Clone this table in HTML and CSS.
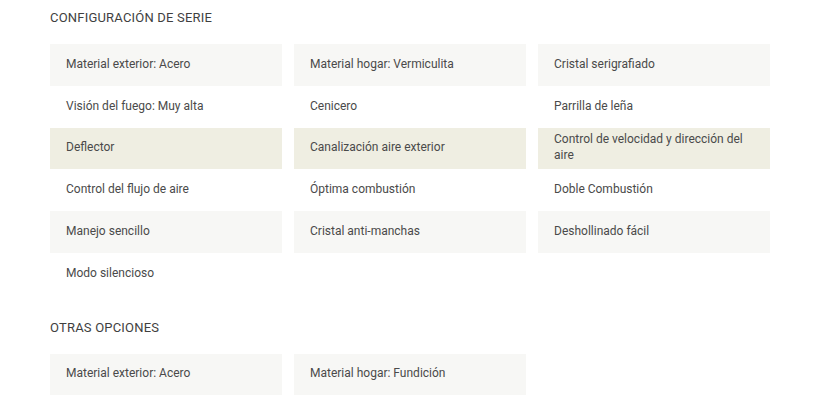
FILE: index.html
```html
<!DOCTYPE html>
<html lang="es">
<head>
<meta charset="utf-8">
<link rel="stylesheet" href="styles.css">
</head>
<body>
<section class="spec">
  <h2 class="spec-title">Configuración de serie</h2>
  <div class="spec-grid">
    <div class="cell shade">Material exterior: Acero</div>
    <div class="cell shade">Material hogar: Vermiculita</div>
    <div class="cell shade">Cristal serigrafiado</div>
    <div class="cell">Visión del fuego: Muy alta</div>
    <div class="cell">Cenicero</div>
    <div class="cell">Parrilla de leña</div>
    <div class="cell hi">Deflector</div>
    <div class="cell hi">Canalización aire exterior</div>
    <div class="cell hi">Control de velocidad y dirección del aire</div>
    <div class="cell">Control del flujo de aire</div>
    <div class="cell">Óptima combustión</div>
    <div class="cell">Doble Combustión</div>
    <div class="cell shade">Manejo sencillo</div>
    <div class="cell shade">Cristal anti-manchas</div>
    <div class="cell shade">Deshollinado fácil</div>
    <div class="cell">Modo silencioso</div>
  </div>
</section>
<section class="spec second">
  <h2 class="spec-title">Otras opciones</h2>
  <div class="spec-grid">
    <div class="cell shade">Material exterior: Acero</div>
    <div class="cell shade">Material hogar: Fundición</div>
  </div>
</section>
</body>
</html>
```
FILE: styles.css
```css
html, body {
  margin: 0;
  padding: 0;
  background: #ffffff;
}
body {
  padding: 8px 50px 0 50px;
  font-family: Roboto, "Liberation Sans", sans-serif;
  color: #4a4a4a;
}
.spec-title {
  margin: 0;
  height: 20px;
  line-height: 20px;
  font-size: 13px;
  font-weight: 400;
  text-transform: uppercase;
  letter-spacing: 0.2px;
  color: #3f3f3f;
}
.spec-grid {
  margin-top: 16px;
  display: grid;
  grid-template-columns: repeat(3, 232px);
  column-gap: 12px;
}
.cell {
  min-height: 41.75px;
  box-sizing: border-box;
  padding: 0 16px 2px 16px;
  display: flex;
  align-items: center;
  font-size: 12px;
  line-height: 16px;
  color: #4a4a4a;
}
.shade {
  background: #f7f7f5;
}
.hi {
  background: #efeee2;
}
.second {
  margin-top: 23px;
}
.second .spec-grid {
  margin-top: 16px;
}
```
